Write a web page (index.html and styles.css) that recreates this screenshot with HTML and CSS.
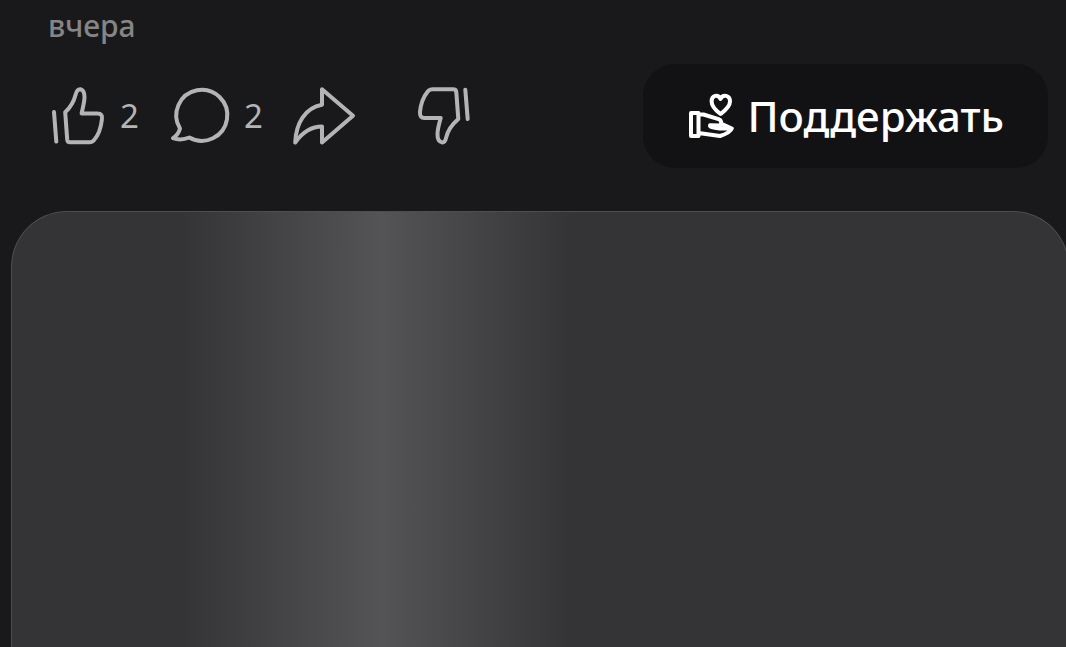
FILE: index.html
```html
<!DOCTYPE html>
<html lang="ru">
<head>
<meta charset="utf-8">
<meta name="viewport" content="width=device-width, initial-scale=1">
<title>Публикация</title>
<link rel="stylesheet" href="styles.css">
</head>
<body>
<main class="post">
  <time class="date">вчера</time>
  <div class="toolbar">
    <div class="actions">
      <button class="action like" type="button" aria-label="Нравится, 2">
        <svg class="icon" width="60" height="64" viewBox="48 84 60 64" aria-hidden="true">
          <path d="M54 112L56.300 141.600M65.200 112.200C69.800 108 73.700 102 75.500 95Q77 89 80.500 89.300Q84.500 90.400 84.500 97C84.500 102 82.800 107.500 81.600 113.500H97.500Q103 113.500 101.900 119.500C101 127.500 98.300 135.300 94.100 140Q92.300 142.300 89.500 142.300H70Q67.500 142.300 67.200 139.500Z"/>
        </svg>
        <span>2</span>
      </button>
      <button class="action comment" type="button" aria-label="Комментарии, 2">
        <svg class="icon" width="64" height="64" viewBox="168 84 64 64" aria-hidden="true">
          <path d="M189.300 137.500A25.500 25.500 0 1 0 180 128.500Q178.500 134.500 173 138.200Q181 141 189.300 137.500Z"/>
        </svg>
        <span>2</span>
      </button>
      <button class="action share" type="button" aria-label="Поделиться">
        <svg class="icon" width="68" height="64" viewBox="290 84 68 64" aria-hidden="true">
          <path d="M322 89.200L353 115.700L322 142.500V126.500C312 126.500 303 131.500 295.200 142.500C296 123 305 108 322 104.800Z"/>
        </svg>
      </button>
      <button class="action dislike" type="button" aria-label="Не нравится">
        <svg class="icon" width="60" height="64" viewBox="414 84 60 64" aria-hidden="true">
          <path d="M465.300 89.700L467.700 119M433 89.300H453Q456 89.300 456.300 92L458.300 119C452 124.500 448 130 446.300 137Q445 142.700 442 142.400Q437.300 141.300 437.500 134C437.600 128 439.500 123 440.700 118H424.500Q419.500 118 420 112C420.700 104 423.700 96.500 427.700 91.500Q429.500 89.300 433 89.300Z"/>
        </svg>
      </button>
    </div>
    <button class="support" type="button">
      <svg class="support-icon" width="48" height="48" viewBox="687 91 48 48" aria-hidden="true">
        <path d="M691 112H698.500V135H691ZM698.500 113.500H703.500L718.500 118.200Q723 120 720 124.500L710 124.300Q709 126.300 719.500 127.500L731.800 127.500Q730.500 131.500 720 135L698.500 132M722 123L731.800 127.500M720.500 113C716.500 110 711.600 106 711.600 100.500C711.600 94 718 92.800 720.500 98C723 92.800 730 94 730 100.500C730 106 724.500 110 720.500 113Z"/>
      </svg>
      <span>Поддержать</span>
    </button>
  </div>
  <div class="placeholder"></div>
</main>
</body>
</html>
```
FILE: styles.css
```css
* {
  box-sizing: border-box;
}

body {
  margin: 0;
  background: #19191b;
  color: #b4b4b4;
  font-family: "Noto Sans", "Open Sans", sans-serif;
}

.post {
  display: flex;
  flex-direction: column;
  min-height: 100vh;
  overflow: hidden;
}

.date {
  padding-left: 48px;
  height: 64px;
  color: #858586;
  font-size: 30px;
  font-weight: 500;
  line-height: 52px;
}

.toolbar {
  display: flex;
  align-items: center;
  justify-content: space-between;
  padding: 0 18px 0 48px;
  margin-bottom: 43px;
}

.actions {
  display: flex;
  align-items: center;
}

.action,
.support {
  display: flex;
  align-items: center;
  border: 0;
  font: inherit;
  cursor: pointer;
}

.action {
  gap: 12px;
  padding: 0;
  background: none;
  color: #b4b4b4;
  font-size: 33px;
  line-height: 44px;
}

.comment {
  margin-left: 29px;
}

.share {
  margin-left: 27px;
}

.dislike {
  margin-left: 56px;
}

.icon,
.support-icon {
  display: block;
  flex: none;
  fill: none;
  stroke: currentColor;
  stroke-width: 4px;
  stroke-linecap: round;
  stroke-linejoin: round;
}

.support {
  gap: 12px;
  height: 104px;
  padding: 0 44px;
  border-radius: 32px;
  background: #121214;
  color: #fff;
  font-size: 42px;
  font-weight: 500;
  line-height: 60px;
}

.placeholder {
  flex: 1;
  margin: 0 -3px 0 11px;
  border: 1px solid #4e4e50;
  border-bottom: 0;
  border-radius: 56px 56px 0 0;
  background: linear-gradient(90deg, #343436 16%, #545456 35%, #343436 53%);
}
```
